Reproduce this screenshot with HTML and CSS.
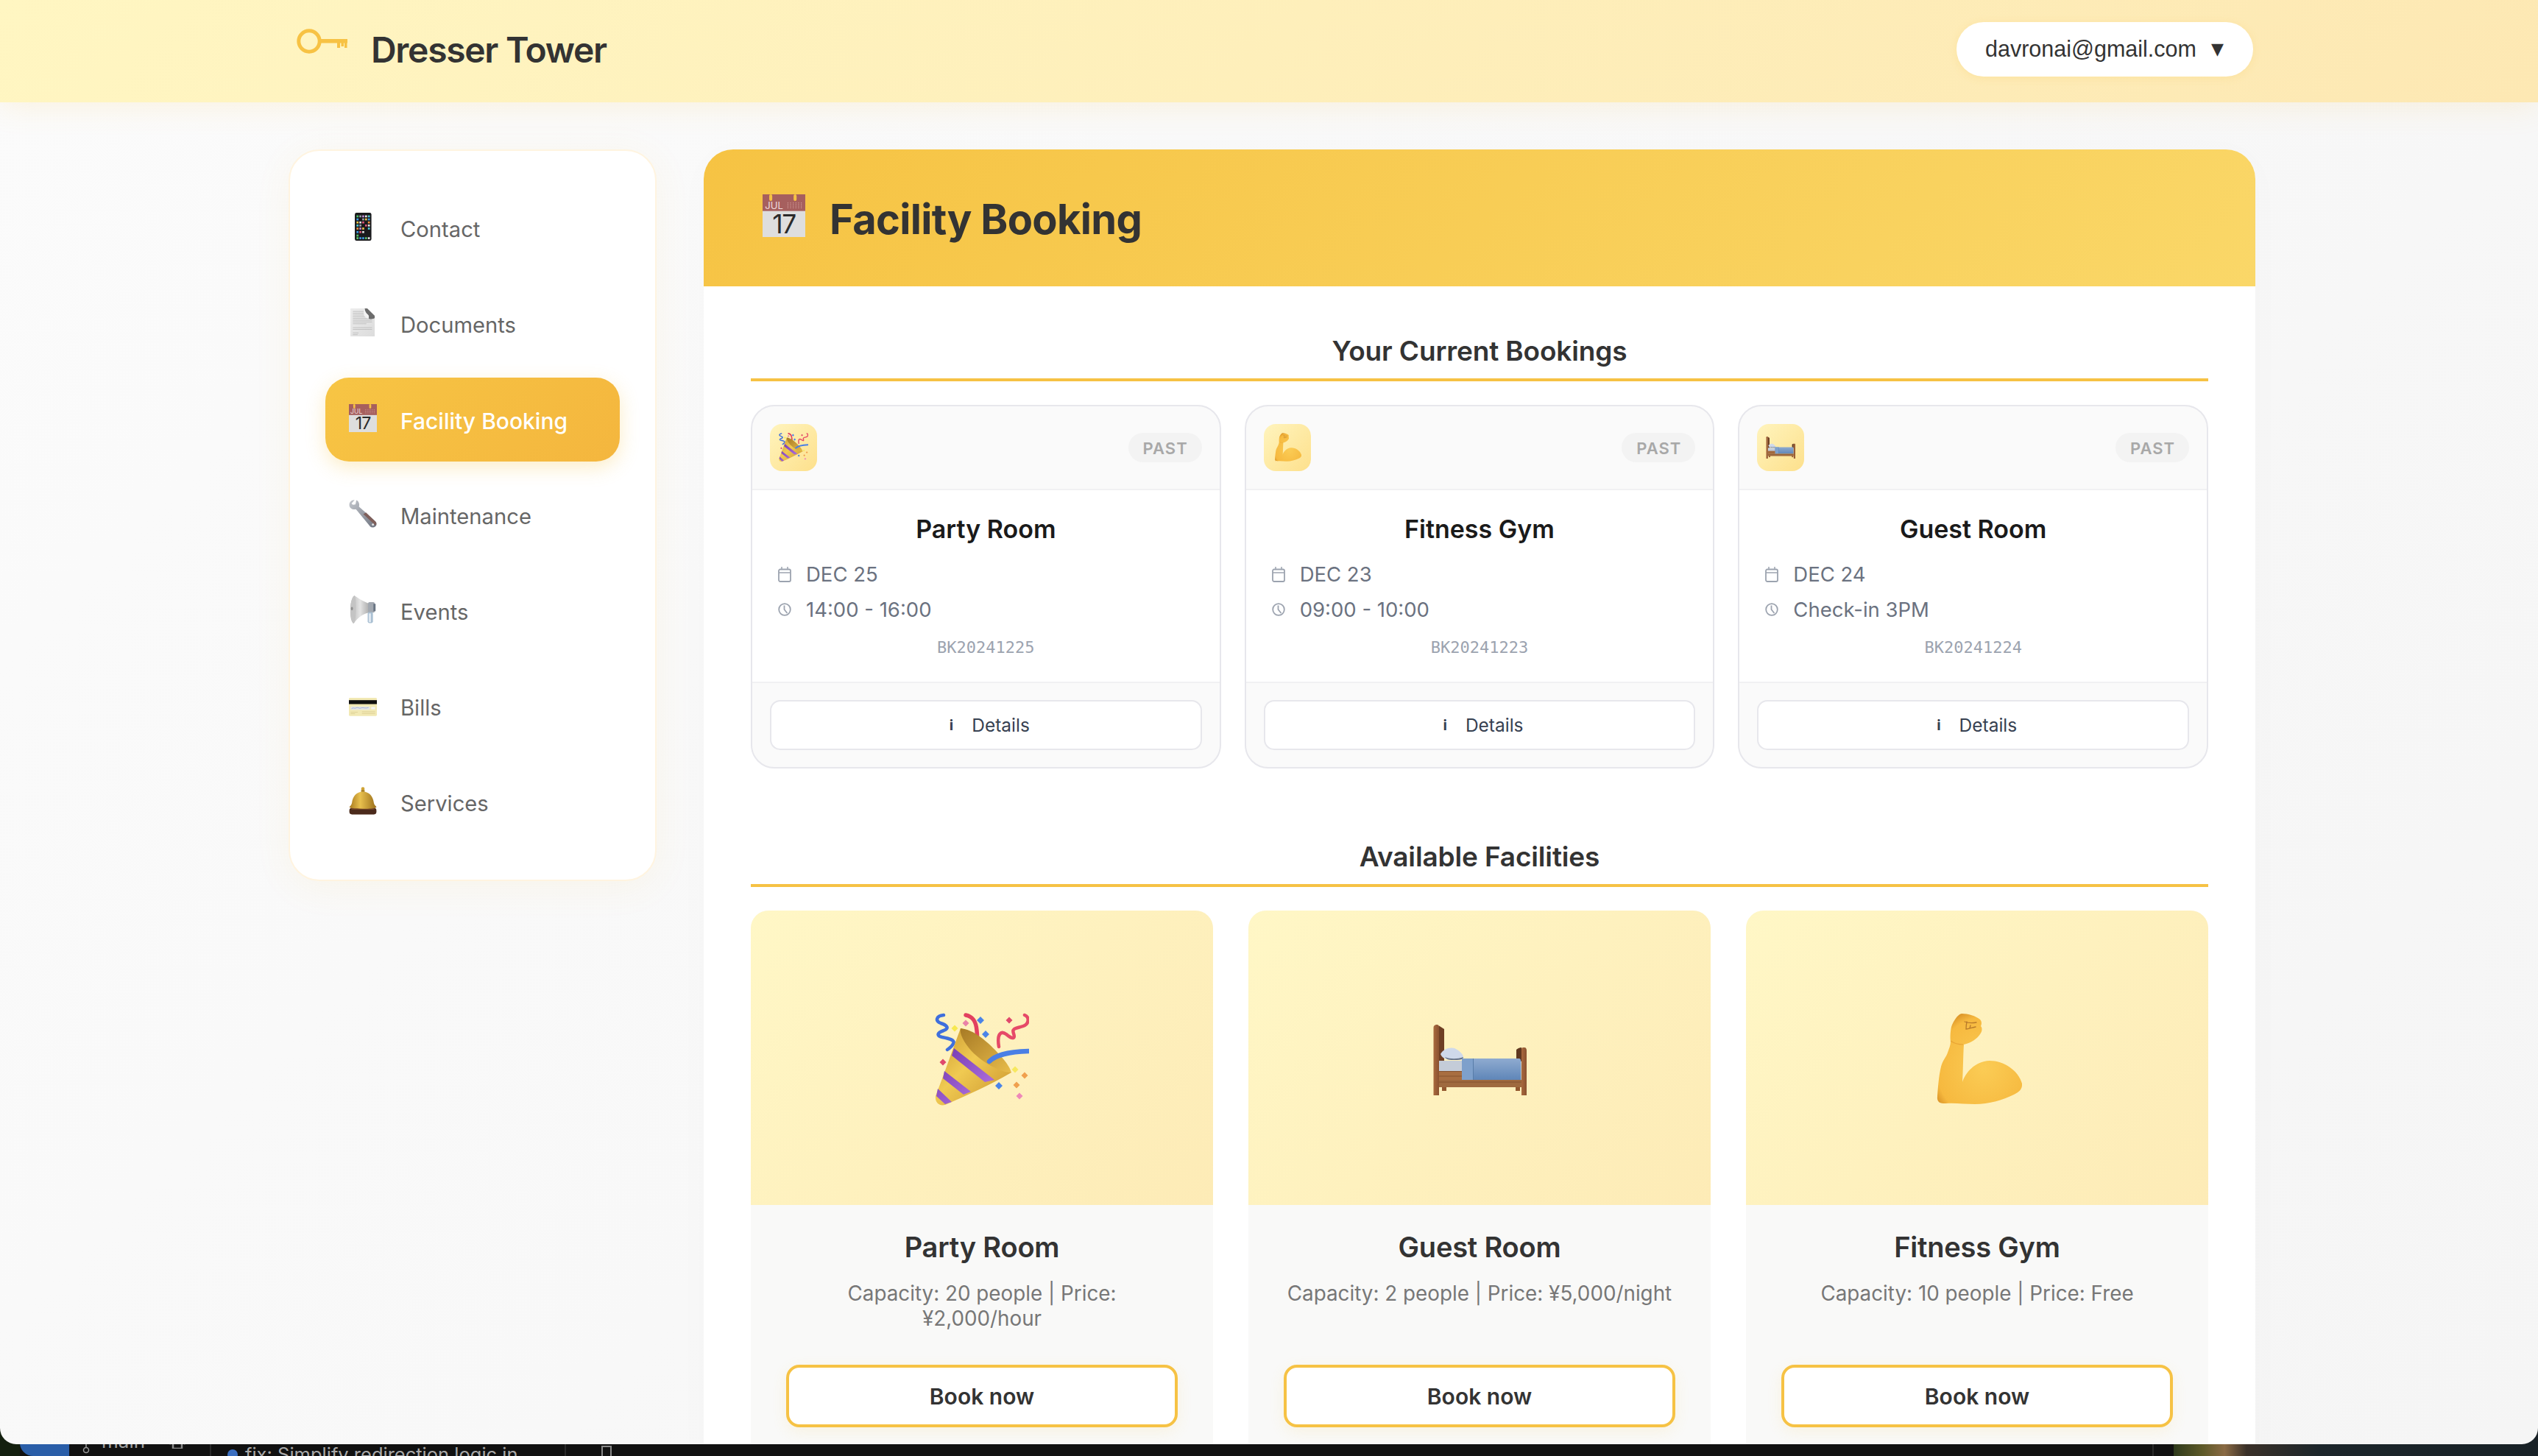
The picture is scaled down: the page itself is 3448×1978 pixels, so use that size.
FILE: index.html
```html
<!DOCTYPE html>
<html lang="en">
<head>
<meta charset="utf-8">
<title>Dresser Tower - Facility Booking</title>
<link rel="stylesheet" href="styles.css">
</head>
<body>
<svg class="sprite" aria-hidden="true">
  <defs>
    <linearGradient id="gGold" x1="0" y1="0" x2="1" y2="1"><stop offset="0" stop-color="#c9962f"/><stop offset=".45" stop-color="#f0ca52"/><stop offset="1" stop-color="#c8922b"/></linearGradient>
    <linearGradient id="gGoldIn" x1="0" y1="0" x2="1" y2="1"><stop offset="0" stop-color="#a77a25"/><stop offset="1" stop-color="#e8bc4a"/></linearGradient>
    <linearGradient id="gPurple" x1="0" y1="0" x2="1" y2="1"><stop offset="0" stop-color="#6f35ad"/><stop offset=".75" stop-color="#a86ad8"/><stop offset="1" stop-color="#6f3598"/></linearGradient>
    <radialGradient id="gArm" cx=".55" cy=".6" r=".7"><stop offset="0" stop-color="#fbcc55"/><stop offset=".8" stop-color="#f6b93f"/><stop offset="1" stop-color="#d0851e"/></radialGradient>
    <linearGradient id="gBlanket" x1="0" y1="0" x2="0" y2="1"><stop offset="0" stop-color="#8fabd0"/><stop offset="1" stop-color="#5f86b8"/></linearGradient>
    <linearGradient id="gWood" x1="0" y1="0" x2="1" y2="0"><stop offset="0" stop-color="#a9693d"/><stop offset="1" stop-color="#8a5230"/></linearGradient>
    <linearGradient id="gBell" x1="0" y1="0" x2="1" y2="0"><stop offset="0" stop-color="#a8791f"/><stop offset=".4" stop-color="#e8c04e"/><stop offset="1" stop-color="#9a6e1a"/></linearGradient>
    <linearGradient id="gHorn" x1="0" y1="0" x2="1" y2="0"><stop offset="0" stop-color="#b8b8b8"/><stop offset=".5" stop-color="#e4e4e4"/><stop offset="1" stop-color="#a8a8a8"/></linearGradient>
    <linearGradient id="gPage" x1="0" y1="0" x2="1" y2="1"><stop offset="0" stop-color="#ececec"/><stop offset="1" stop-color="#dcdcdc"/></linearGradient>
    <linearGradient id="gSteel" x1="0" y1="0" x2="1" y2="1"><stop offset="0" stop-color="#c2c6cc"/><stop offset="1" stop-color="#6f7480"/></linearGradient>
  </defs>
  <symbol id="e-party" viewBox="0 0 128 128">
    <g fill="none" stroke-linecap="round" stroke-linejoin="round">
      <path d="M12 3C2 4 0 11 8 14C17 17 20 21 12 24C3 27 2 31 10 33C20 35 28 37 25 42C23 46 20 48 17 50" stroke="#3f6fdc" stroke-width="4.5"/>
      <path d="M42 3C52 5 56 12 57 24C58 34 58 42 58 50" stroke="#e2415f" stroke-width="5.5"/>
      <path d="M122 3C129 6 128 15 120 18C112 21 104 20 107 28C110 37 104 35 97 29C90 24 84 28 87 46" stroke="#e64a68" stroke-width="4.5"/>
    </g>
    <path d="M35 21C24 50 12 85 1 113C0 122 6 127 14 125C44 112 75 98 104 81C96 60 60 28 35 21Z" fill="url(#gGold)"/>
    <path d="M26 48L23 58L68 94L81 91Z M13 79L11 89L39 111L49 107Z M4 103L2 113L14 124L23 121Z" fill="url(#gPurple)"/>
    <path d="M35 21C52 22 73 40 88 57C98 68 104 77 103 81C90 81 65 68 50 52C40 41 33 28 35 21Z" fill="url(#gGoldIn)"/>
    <path d="M74 66C82 58 96 53 127 52" fill="none" stroke="#4a7fe5" stroke-width="6.5" stroke-linecap="round"/>
    <path d="M27 16.500L31.500 21L27 25.500L22.500 21Z" fill="#f7e84f"/>
    <path d="M42 9.500L46.500 14L42 18.500L37.500 14Z" fill="#ea82a8"/>
    <path d="M62 5L67 10L62 15L57 10Z M69 24L74 29L69 34L64 29Z M87 94L92 99L87 104L82 99Z" fill="#4a84e8"/>
    <path d="M101 5.500L105.500 10L101 14.500L96.500 10Z M11 62.500L15.500 67L11 71.500L6.500 67Z" fill="#e0496c"/>
    <path d="M109 72.500L113.500 77L109 81.500L104.500 77Z" fill="#f7e85f"/>
    <path d="M122 80.500L126.500 85L122 89.500L117.500 85Z M111 93.500L115.500 98L111 102.500L106.500 98Z" fill="#f0a04e"/>
    <path d="M115 108.500L119.500 113L115 117.500L110.500 113Z" fill="#ee88b8"/>
  </symbol>
  <symbol id="e-bed" viewBox="0 0 128 128">
    <path d="M9 17.500L16 22V66H9Z" fill="#6e3f24"/>
    <path d="M114 50C116 48 119 47 121 47V66H114Z" fill="#5f3820"/>
    <rect x="13" y="97" width="6" height="9" fill="#93582f"/>
    <rect x="113" y="97" width="6" height="9" fill="#93582f"/>
    <rect x="9" y="65" width="33" height="15" fill="#c4ccd8"/>
    <path d="M11 56C14 49 24 46 30 48C36 51 42 56 42 60C42 64 36 64 28 64C20 64 13 62 11 56Z" fill="#cfd9ea"/>
    <path d="M17 60C24 63 34 63 42 60C42 64 36 64 28 64C22 64 19 63 17 60Z" fill="#66738a"/>
    <path d="M40 62H118C120 62 120.500 66 120.500 68V91H40Z" fill="url(#gBlanket)"/>
    <rect x="40" y="62" width="15" height="29" fill="#7ea0cb"/>
    <rect x="55" y="62" width="1" height="29" fill="#587da9"/>
    <rect x="9" y="79" width="31" height="13" fill="#a86e41"/>
    <rect x="9" y="91" width="112" height="10" fill="#9f6a3f"/>
    <path d="M9 94H121M9 79.500H40M9 86H40" stroke="#7d4d2b" stroke-width=".8" fill="none"/>
    <path d="M1.500 20C1.500 17 4 16 6 16C8 16 9 17 9 19V112H1.500Z" fill="url(#gWood)"/>
    <path d="M121 49C121 47 123 47 125 47C127 47 128 49 128 51V112H121Z" fill="url(#gWood)"/>
  </symbol>
  <symbol id="e-arm" viewBox="0 0 128 128">
    <path d="M43 1C52 1 62 4 68 9C71 12 70 16 69 18C72 21 70 27 68 29C64 35 56 41 46 43C45 58 45 78 44 94C48 82 60 66 81 65C100 65 120 78 125 96C126 104 120 108 114 111C100 118 80 124 61 124C48 124 34 122 21 123C14 123 9 122 10 113C11 100 12 85 15 73C17 65 22 60 24 54C26 48 28 44 28 39C27 32 28 24 29 19C31 13 37 2 43 1Z" fill="url(#gArm)"/>
    <path d="M47 12C52 14 58 14 63 13M50 12C49 17 49 20 49 22C53 22 56 20 62 19M55 17L54 21" fill="none" stroke="#b87a2a" stroke-width="1.300" stroke-linecap="round"/>
    <path d="M45 43C38 43 32 41 28 38" fill="none" stroke="#e8a435" stroke-width="1.200"/>
  </symbol>
  <symbol id="e-phone" viewBox="0 0 128 128">
    <rect x="27" y="0" width="76" height="128" rx="8" fill="#1a1a1c"/>
    <g fill="#4ec26a"><rect x="35" y="12" width="9" height="9"/><rect x="35" y="100" width="9" height="9"/></g>
    <g fill="#9aa0a8"><rect x="48" y="12" width="9" height="9"/><rect x="61" y="26" width="9" height="9"/><rect x="48" y="54" width="9" height="9"/></g>
    <g fill="#c58ad8"><rect x="61" y="12" width="9" height="9"/><rect x="48" y="68" width="9" height="9"/></g>
    <g fill="#e8e8e8"><rect x="74" y="12" width="9" height="9"/><rect x="48" y="40" width="9" height="9"/><rect x="87" y="54" width="9" height="9"/><rect x="61" y="84" width="9" height="9"/></g>
    <g fill="#3d9be8"><rect x="35" y="26" width="9" height="9"/><rect x="87" y="26" width="9" height="9"/><rect x="35" y="84" width="9" height="9"/><rect x="48" y="112" width="9" height="9"/><rect x="61" y="112" width="9" height="9"/></g>
    <g fill="#f0c84a"><rect x="35" y="40" width="9" height="9"/><rect x="74" y="26" width="9" height="9"/><rect x="61" y="68" width="9" height="9"/></g>
    <g fill="#e0557a"><rect x="61" y="40" width="9" height="9"/><rect x="74" y="54" width="9" height="9"/><rect x="48" y="84" width="9" height="9"/></g>
    <g fill="#4ecbd8"><rect x="87" y="12" width="9" height="9"/><rect x="35" y="54" width="9" height="9"/><rect x="87" y="68" width="9" height="9"/></g>
    <g fill="#f0913e"><rect x="87" y="40" width="9" height="9"/><rect x="35" y="68" width="9" height="9"/></g>
    <g fill="#5cc26a"><rect x="35" y="112" width="9" height="9"/><rect x="74" y="112" width="9" height="9"/></g>
    <rect x="87" y="112" width="9" height="9" fill="#e8e8e8"/>
  </symbol>
  <symbol id="e-doc" viewBox="0 0 128 128">
    <path d="M7 0H84L118 34V128H7Z" fill="url(#gPage)"/>
    <path d="M18 14H72M18 22H76M18 30H80M18 38H88M18 46H106M18 54H106M18 62H106M18 70H80M18 88H106M18 96H106M18 112H44M18 120H40" stroke="#bdbdbd" stroke-width="3" fill="none"/>
    <path d="M72 0H84L118 34V44C110 50 96 50 90 46C94 38 90 30 84 26C78 20 72 10 72 0Z" fill="#6c6c6c"/>
    <path d="M72 0C72 12 78 22 86 28C92 34 92 40 90 46C80 46 70 38 68 26C67 16 68 6 72 0Z" fill="#f2f2f2"/>
  </symbol>
  <symbol id="e-wrench" viewBox="0 0 128 128">
    <path d="M26 2C12 0 1 12 2 26C3 40 18 48 32 44L98 124C104 130 116 128 122 122C128 116 128 106 122 100L46 32C50 18 44 6 34 3L30 22L18 24L12 18Z" transform="translate(0 -1)" fill="url(#gSteel)"/>
    <path d="M66 66L122 118C126 112 127 106 122 100L78 58Z" fill="#7f5f5a"/>
    <circle cx="110" cy="114" r="5" fill="#e8e8e8"/>
  </symbol>
  <symbol id="e-horn" viewBox="0 0 128 128">
    <path d="M25 0C40 10 62 26 96 38V78C66 80 40 102 22 128C10 122 6 96 7 62C8 34 14 8 25 0Z" fill="url(#gHorn)"/>
    <path d="M25 0C12 10 7 36 7 62C7 96 12 122 22 128C30 118 32 92 32 62C32 34 32 8 25 0Z" fill="#c4c4c4"/>
    <ellipse cx="14" cy="60" rx="5" ry="8" fill="#8f8f8f"/>
    <rect x="88" y="30" width="30" height="48" rx="6" fill="#a2a8b0"/>
    <rect x="112" y="38" width="10" height="34" fill="#6a7584"/>
    <rect x="86" y="76" width="24" height="50" rx="7" fill="#a9bfd2"/>
    <rect x="91" y="82" width="10" height="40" fill="#dfe8f0"/>
  </symbol>
  <symbol id="e-card" viewBox="0 0 128 128">
    <rect x="0" y="30" width="128" height="84" rx="5" fill="#f2e9b4"/>
    <rect x="0" y="41" width="128" height="18" fill="#0f0f0f"/>
    <rect x="8" y="70" width="88" height="15" fill="#e4e6e8"/>
    <path d="M12 80C20 72 26 82 34 76C42 72 48 82 58 76C66 74 76 80 90 75" stroke="#6d80c0" stroke-width="1.800" fill="none"/>
    <rect x="102" y="72" width="18" height="11" fill="#f4f4f4"/>
    <path d="M8 96H40M8 103H28M60 94H120M60 102H120" stroke="#d8ca8e" stroke-width="2.500"/>
  </symbol>
  <symbol id="e-bell" viewBox="0 0 128 128">
    <rect x="2" y="96" width="124" height="30" rx="12" fill="#4b2a1b"/>
    <rect x="9" y="90" width="110" height="14" rx="6" fill="#6f4126"/>
    <circle cx="64" cy="9" r="8" fill="#d0a437"/>
    <rect x="56" y="14" width="16" height="14" fill="#a88128"/>
    <path d="M64 22C34 22 18 44 14 72C12 82 7 86 2 92C4 98 20 100 64 100C108 100 124 98 126 92C121 86 116 82 114 72C110 44 94 22 64 22Z" fill="url(#gBell)"/>
  </symbol>
  <symbol id="i-cal" viewBox="0 0 18 22">
    <path d="M5 1V5M13 1V5" stroke="currentColor" stroke-width="1.500" fill="none"/>
    <rect x="1" y="4.500" width="16" height="16.500" rx="2" stroke="currentColor" stroke-width="1.800" fill="none"/>
    <path d="M1 9H17" stroke="currentColor" stroke-width="1.500"/>
  </symbol>
  <symbol id="i-clock" viewBox="0 0 18 18">
    <circle cx="9" cy="9" r="7.800" stroke="currentColor" stroke-width="1.800" fill="none"/>
    <path d="M8.500 3.500V9L12.500 14" stroke="currentColor" stroke-width="1.800" fill="none"/>
  </symbol>
</svg>

<div class="screen">
  <div class="backdrop">
    <div class="bd-corner"></div>
    <div class="bd-remote"></div>
    <div class="bd-branch"><svg class="bd-branch-icon" viewBox="0 0 10 24"><circle cx="5" cy="18" r="3.500" fill="none" stroke="#9a9a9a" stroke-width="1.500"/><path d="M5 0V14" stroke="#9a9a9a" stroke-width="1.500"/></svg><span>main</span></div>
    <div class="bd-sync"><svg class="bd-sync-icon" viewBox="0 0 30 14"><path d="M1 2L6 8M9 0V14H21V0M29 2L24 8" stroke="#8a8a8a" stroke-width="2.500" fill="none"/></svg></div>
    <div class="bd-commit"><i class="bd-dot"></i><span>fix: Simplify redirection logic in</span></div>
    <div class="bd-box"><i class="bd-box-mark"></i></div>
    <div class="bd-fill"></div>
    <div class="bd-photo"></div>
  </div>

  <div class="window">
    <header class="topbar">
      <div class="brand">
        <svg class="brand-key" viewBox="0 0 70 34">
          <circle cx="17" cy="17" r="14.200" fill="none" stroke="#f7c244" stroke-width="5"/>
          <path d="M31 14H69V19.500H31Z" fill="#f7c244"/>
          <path d="M55 19H59V26H55ZM60.500 19H64V24H60.500ZM65 19H68.500V26H65Z" fill="#f7c244"/>
        </svg>
        <span class="brand-name">Dresser Tower</span>
      </div>
      <button class="user-menu"><span>davronai@gmail.com</span><span class="caret">▼</span></button>
    </header>

    <div class="layout">
      <nav class="sidebar">
        <a class="nav-item"><svg class="nav-icon"><use href="#e-phone"/></svg><span class="nav-label">Contact</span></a>
        <a class="nav-item"><svg class="nav-icon"><use href="#e-doc"/></svg><span class="nav-label">Documents</span></a>
        <a class="nav-item is-active">
          <svg class="nav-icon cal-icon" viewBox="0 0 128 128">
            <rect x="0" y="0" width="128" height="128" fill="#dedede"/>
            <rect x="0" y="0" width="128" height="50" fill="#a65f5e"/>
            <rect x="20" y="0" width="9" height="20" rx="4.500" fill="#f6c244"/>
            <rect x="93" y="0" width="9" height="20" rx="4.500" fill="#f6c244"/>
            <path d="M76 24V44M84 24V44M92 24V44M100 24V44M108 24V44M116 24V44" stroke="#cf9a98" stroke-width="2.500" stroke-dasharray="3 2"/>
            <text x="7" y="44" class="cal-month">JUL</text>
            <text x="64" y="116" text-anchor="middle" class="cal-day">17</text>
          </svg>
          <span class="nav-label">Facility Booking</span>
        </a>
        <a class="nav-item"><svg class="nav-icon"><use href="#e-wrench"/></svg><span class="nav-label">Maintenance</span></a>
        <a class="nav-item"><svg class="nav-icon"><use href="#e-horn"/></svg><span class="nav-label">Events</span></a>
        <a class="nav-item"><svg class="nav-icon"><use href="#e-card"/></svg><span class="nav-label">Bills</span></a>
        <a class="nav-item"><svg class="nav-icon"><use href="#e-bell"/></svg><span class="nav-label">Services</span></a>
      </nav>

      <main class="panel">
        <div class="banner">
          <svg class="banner-icon cal-icon" viewBox="0 0 128 128">
            <rect x="0" y="0" width="128" height="128" fill="#dedede"/>
            <rect x="0" y="0" width="128" height="50" fill="#a65f5e"/>
            <rect x="20" y="0" width="9" height="20" rx="4.500" fill="#f6c244"/>
            <rect x="93" y="0" width="9" height="20" rx="4.500" fill="#f6c244"/>
            <path d="M76 24V44M84 24V44M92 24V44M100 24V44M108 24V44M116 24V44" stroke="#cf9a98" stroke-width="2.500" stroke-dasharray="3 2"/>
            <text x="7" y="44" class="cal-month">JUL</text>
            <text x="64" y="116" text-anchor="middle" class="cal-day">17</text>
          </svg>
          <h1 class="banner-title">Facility Booking</h1>
        </div>
        <div class="panel-body">
          <section class="section">
            <h2 class="section-title">Your Current Bookings</h2>
            <div class="bookings">
              <article class="booking">
                <div class="booking-head">
                  <div class="tile"><svg class="tile-icon"><use href="#e-party"/></svg></div>
                  <span class="pill">PAST</span>
                </div>
                <div class="booking-body">
                  <h3 class="booking-name">Party Room</h3>
                  <div class="booking-row"><svg class="row-icon row-icon-cal"><use href="#i-cal"/></svg><span>DEC 25</span></div>
                  <div class="booking-row"><svg class="row-icon"><use href="#i-clock"/></svg><span>14:00 - 16:00</span></div>
                  <div class="booking-code">BK20241225</div>
                </div>
                <div class="booking-foot"><button class="details"><span class="details-i">i</span><span>Details</span></button></div>
              </article>
              <article class="booking">
                <div class="booking-head">
                  <div class="tile"><svg class="tile-icon"><use href="#e-arm"/></svg></div>
                  <span class="pill">PAST</span>
                </div>
                <div class="booking-body">
                  <h3 class="booking-name">Fitness Gym</h3>
                  <div class="booking-row"><svg class="row-icon row-icon-cal"><use href="#i-cal"/></svg><span>DEC 23</span></div>
                  <div class="booking-row"><svg class="row-icon"><use href="#i-clock"/></svg><span>09:00 - 10:00</span></div>
                  <div class="booking-code">BK20241223</div>
                </div>
                <div class="booking-foot"><button class="details"><span class="details-i">i</span><span>Details</span></button></div>
              </article>
              <article class="booking">
                <div class="booking-head">
                  <div class="tile"><svg class="tile-icon"><use href="#e-bed"/></svg></div>
                  <span class="pill">PAST</span>
                </div>
                <div class="booking-body">
                  <h3 class="booking-name">Guest Room</h3>
                  <div class="booking-row"><svg class="row-icon row-icon-cal"><use href="#i-cal"/></svg><span>DEC 24</span></div>
                  <div class="booking-row"><svg class="row-icon"><use href="#i-clock"/></svg><span>Check-in 3PM</span></div>
                  <div class="booking-code">BK20241224</div>
                </div>
                <div class="booking-foot"><button class="details"><span class="details-i">i</span><span>Details</span></button></div>
              </article>
            </div>
          </section>

          <section class="section section-facilities">
            <h2 class="section-title">Available Facilities</h2>
            <div class="facilities">
              <article class="facility">
                <div class="facility-art"><svg class="facility-icon"><use href="#e-party"/></svg></div>
                <div class="facility-info">
                  <h3 class="facility-name">Party Room</h3>
                  <p class="facility-desc">Capacity: 20 people | Price: ¥2,000/hour</p>
                  <button class="book">Book now</button>
                </div>
              </article>
              <article class="facility">
                <div class="facility-art"><svg class="facility-icon"><use href="#e-bed"/></svg></div>
                <div class="facility-info">
                  <h3 class="facility-name">Guest Room</h3>
                  <p class="facility-desc">Capacity: 2 people | Price: ¥5,000/night</p>
                  <button class="book">Book now</button>
                </div>
              </article>
              <article class="facility">
                <div class="facility-art"><svg class="facility-icon"><use href="#e-arm"/></svg></div>
                <div class="facility-info">
                  <h3 class="facility-name">Fitness Gym</h3>
                  <p class="facility-desc">Capacity: 10 people | Price: Free</p>
                  <button class="book">Book now</button>
                </div>
              </article>
            </div>
          </section>
        </div>
      </main>
    </div>
  </div>
</div>
</body>
</html>
```

FILE: styles.css
```css
* { box-sizing: border-box; }
html, body { margin: 0; padding: 0; background: #111; }
body { font-family: Inter, "Noto Sans", sans-serif; color: #333; overflow: hidden; }
h1, h2, h3, p { margin: 0; }
button { font-family: inherit; cursor: pointer; }

.sprite { position: absolute; width: 0; height: 0; }
.cal-icon { overflow: visible; }
.cal-month { font: 400 29px Inter, sans-serif; fill: #efdcdc; }
.cal-day { font: 400 78px Inter, sans-serif; fill: #2b2b2b; letter-spacing: -3px; }

.screen { display: grid; width: 3448px; height: 1978px; overflow: hidden; }
.window, .backdrop { grid-area: 1 / 1; }

/* desktop strip behind the browser window */
.backdrop { align-self: end; height: 60px; display: flex; background: #111; color: #9a9a9a; font-size: 26px; }
.bd-corner { width: 27px; background: #14200f; }
.bd-remote { width: 67px; background: #2a5ea8; border-bottom-left-radius: 18px; }
.bd-branch { width: 108px; display: flex; gap: 16px; align-items: flex-start; padding: 25px 0 0 18px; color: #a0a0a0; font-size: 26px; line-height: 30px; }
.bd-branch-icon { width: 10px; height: 32px; flex: none; margin-top: 5px; }
.bd-sync { width: 85px; padding: 36px 0 0 24px; border-right: 2px solid #2a2a2a; }
.bd-sync-icon { width: 30px; height: 14px; display: block; }
.bd-commit { width: 482px; display: flex; gap: 10px; padding: 42px 0 0 22px; border-right: 2px solid #2a2a2a; white-space: nowrap; line-height: 32px; font-size: 25.500px; color: #a8a8a8; }
.bd-dot { width: 14px; height: 14px; margin-top: 9px; background: #3b6fc0; border-radius: 50%; flex: none; }
.bd-box { width: 60px; padding: 46px 0 0 48px; }
.bd-box-mark { display: block; width: 14px; height: 16px; border: 2px solid #888; border-bottom: 0; }
.bd-fill { flex: 1; border-right: 2px solid #2a2a2a; margin-right: 27px; }
.bd-photo { width: 495px; background: linear-gradient(90deg, #2e3a1c 0, #5e5a28 8%, #8a6a44 14%, #3a3028 20%, #1c262b 40%, #182126 100%); }

.window { align-self: start; height: 1962px; overflow: hidden; border-radius: 0 0 22px 22px; background: linear-gradient(135deg, #fbfbfb, #f5f5f5); position: relative; }

.topbar { height: 139px; display: flex; justify-content: space-between; align-items: center; padding: 0 387px 6px 403px; background: linear-gradient(135deg, #fff6c2, #fde8b3); box-shadow: 0 4px 40px rgba(246, 194, 68, .16); position: relative; }
.brand { display: flex; align-items: center; gap: 31px; }
.brand-key { width: 70px; height: 34px; flex: none; margin-top: -22px; }
.brand-name { font-size: 48px; font-weight: 600; color: #333; line-height: 58px; letter-spacing: -1.300px; padding-top: 2px; }
.user-menu { width: 403px; height: 74px; display: flex; align-items: center; gap: 20px; padding: 0 0 0 39px; border: 0; border-radius: 37px; background: #fff; color: #333; font-family: "Liberation Sans", sans-serif; font-size: 30.500px; box-shadow: 0 2px 12px rgba(246, 194, 68, .18); }
.caret { font-size: 22px; font-family: "DejaVu Sans", sans-serif; }

.layout { display: flex; align-items: flex-start; gap: 64px; padding: 64px 0 0 392px; }
.sidebar { width: 500px; padding: 48px 48px; display: flex; flex-direction: column; gap: 16px; background: #fff; border: 2px solid #fff4e0; border-radius: 42px; box-shadow: 0 8px 50px rgba(246, 194, 68, .08); }
.nav-item { height: 114px; display: flex; align-items: center; gap: 32px; padding: 0 32px; border-radius: 32px; color: #666; font-size: 29.200px; line-height: 36px; }
.nav-label { padding-top: 3px; }
.nav-icon { width: 38px; height: 38px; flex: none; margin-top: -4px; }
.nav-item.is-active { background: linear-gradient(135deg, #f7c544, #f4b63e); color: #fff; font-weight: 500; font-size: 30px; box-shadow: 0 8px 26px rgba(246, 194, 68, .3); }

.panel { width: 2108px; background: #fff; border-radius: 40px 40px 0 0; box-shadow: 0 8px 50px rgba(0, 0, 0, .02); }
.banner { height: 186px; display: flex; align-items: center; gap: 33px; padding: 0 80px; background: linear-gradient(135deg, #f6c343, #fad768); border-radius: 40px 40px 0 0; }
.banner-icon { width: 58px; height: 58px; flex: none; margin-top: -6px; }
.banner-title { font-size: 56px; font-weight: 700; color: #333; line-height: 68px; letter-spacing: -.7px; padding-top: 4px; }

.panel-body { padding: 64px 64px 0; }
.section-title { text-align: center; font-size: 37px; font-weight: 600; line-height: 48px; color: #333; padding-bottom: 13px; border-bottom: 4px solid #f6c244; margin-bottom: 32px; letter-spacing: -.15px; }
.section-facilities { margin-top: 96px; }

.bookings { display: grid; grid-template-columns: repeat(3, 1fr); gap: 32px; }
.booking { border: 2px solid #e7e7ec; border-radius: 32px; background: #fafafa; overflow: hidden; }
.booking-head { display: flex; justify-content: space-between; align-items: center; padding: 24px; border-bottom: 2px solid #f1f1f3; }
.tile { width: 64px; height: 64px; display: flex; align-items: center; justify-content: center; border-radius: 16px; background: linear-gradient(135deg, #fff4bd, #fde08c); }
.tile-icon { width: 40px; height: 40px; }
.pill { height: 40px; padding: 2px 19px 0 20px; border-radius: 20px; background: #f3f3f3; color: #a8a8a8; font-size: 22px; font-weight: 600; line-height: 38px; letter-spacing: 1px; }
.booking-body { height: 260px; padding: 31px 35px 0; background: #fff; }
.booking-name { text-align: center; font-size: 34px; font-weight: 600; line-height: 44px; color: #1a1a1a; margin-bottom: 22px; }
.booking-row { height: 34px; display: flex; align-items: center; gap: 20px; font-size: 27.500px; color: #6b7280; margin-bottom: 14px; }
.row-icon { width: 18px; height: 18px; color: #9ca3af; flex: none; }
.row-icon-cal { height: 22px; }
.booking-code { text-align: center; font-family: "DejaVu Sans Mono", monospace; font-size: 22px; line-height: 28px; color: #9ca3af; margin-top: 21px; }
.booking-foot { padding: 23px 24px; border-top: 2px solid #f1f1f3; }
.details { width: 100%; height: 68px; display: flex; align-items: center; justify-content: center; gap: 25px; padding: 0 0 0 10px; border: 2px solid #e7e7ec; border-radius: 14px; background: #fff; color: #374151; font-size: 24.500px; font-weight: 400; }
.details-i { font-size: 20px; font-weight: 700; }

.facilities { display: grid; grid-template-columns: repeat(3, 1fr); gap: 48px; }
.facility { background: #f9f9f8; border-radius: 24px; overflow: hidden; }
.facility-art { height: 400px; display: flex; align-items: center; justify-content: center; background: linear-gradient(135deg, #fff7c6, #fdebb6); }
.facility-icon { width: 128px; height: 128px; margin-top: 6px; }
.facility-info { padding: 32px 48px 48px; display: flex; flex-direction: column; text-align: center; }
.facility-name { font-size: 38px; font-weight: 600; line-height: 50px; color: #333; margin-bottom: 21px; letter-spacing: -.2px; }
.facility-desc { font-size: 27.800px; line-height: 34px; min-height: 68px; color: #777; margin-bottom: 46px; }
.book { height: 85px; border: 4px solid #f6c244; border-radius: 18px; background: #fff; color: #333; font-size: 30px; font-weight: 600; box-shadow: 0 6px 20px rgba(246, 194, 68, .12); }
```
